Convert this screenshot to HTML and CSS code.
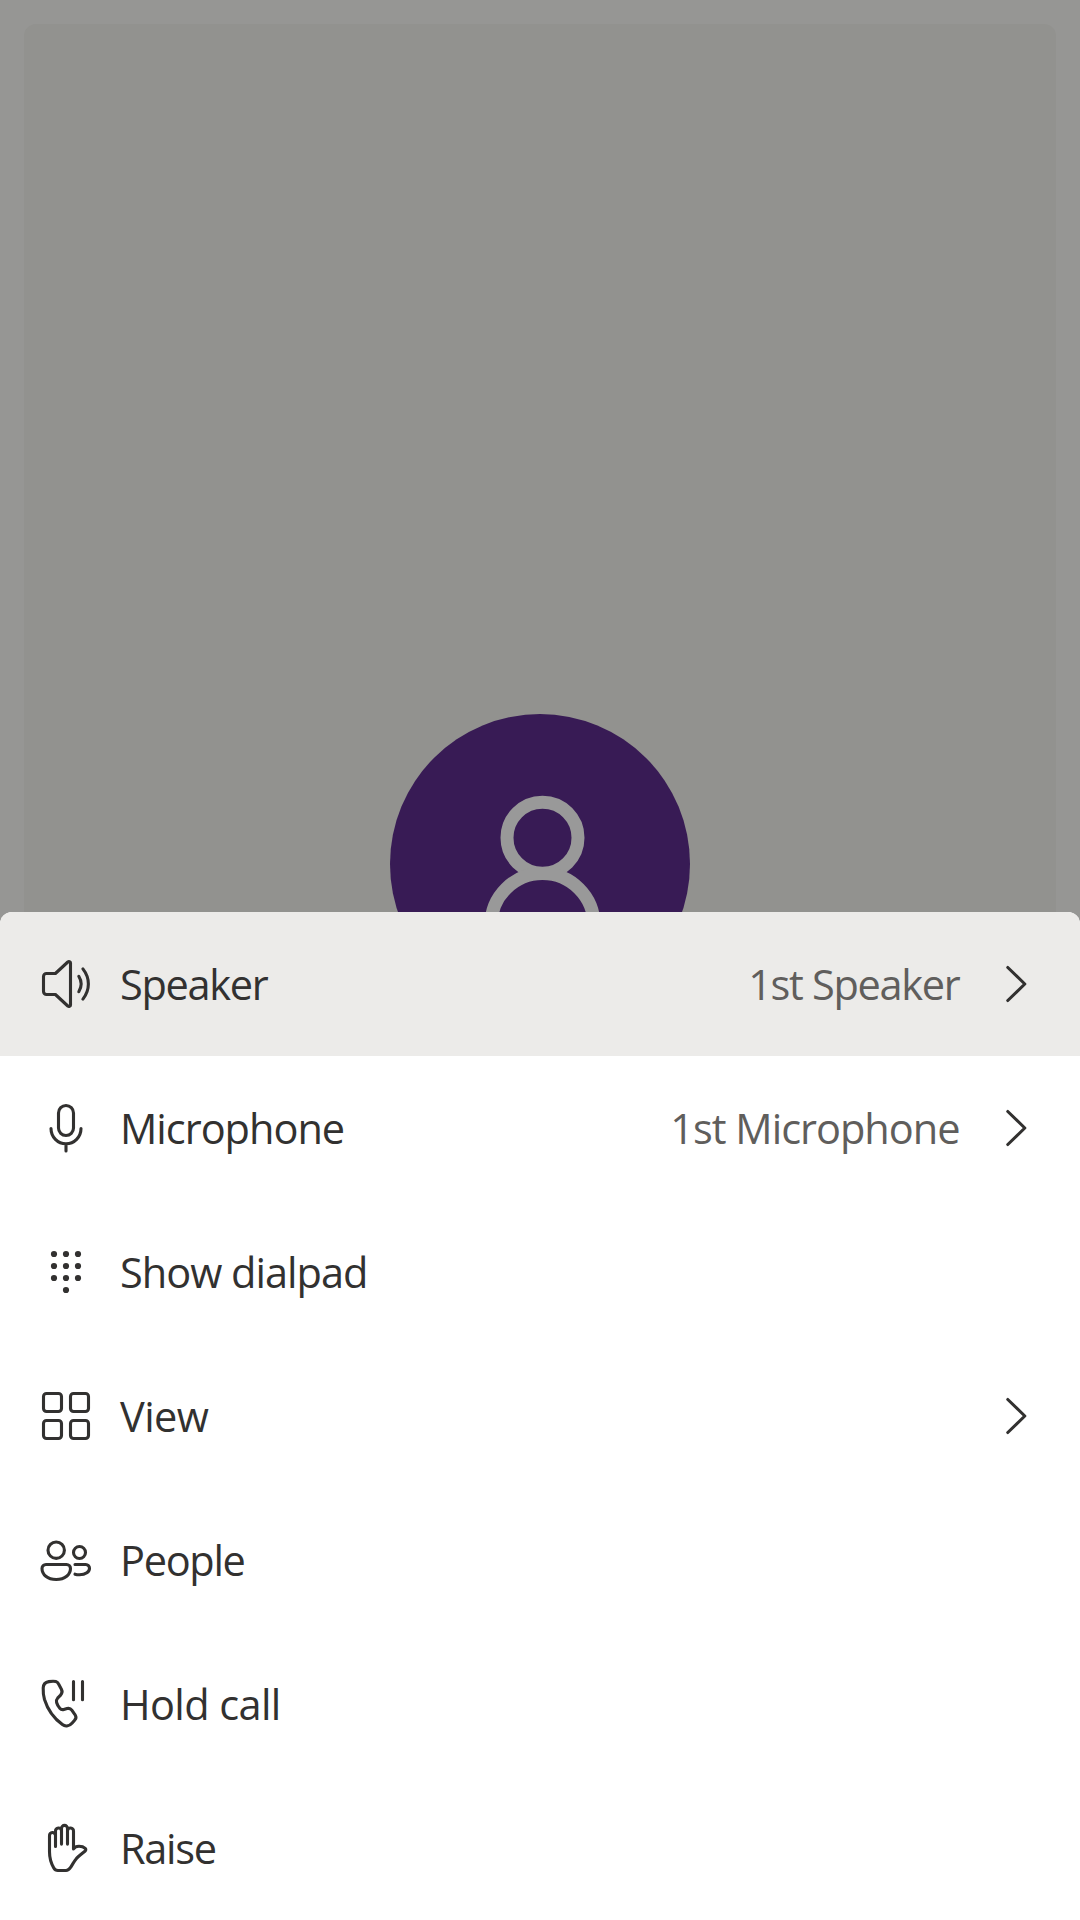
FILE: index.html
```html
<!DOCTYPE html>
<html lang="en">
<head>
<meta charset="utf-8">
<title>Call options</title>
<link rel="stylesheet" href="styles.css">
</head>
<body>
<div class="screen">
  <main class="stage">
    <svg class="avatar" viewBox="0 0 300 300">
      <circle class="avatar-disc" cx="150" cy="150" r="150"/>
      <circle class="avatar-line" cx="152.5" cy="123.7" r="35.5"/>
      <path class="avatar-line" d="M101 211a51.5 51.5 0 0 1 103 0v8h-103z"/>
    </svg>
  </main>
  <ul class="sheet">
    <li class="row row-active">
      <svg class="icon" viewBox="0 0 60 60"><path d="M10.5 19.5h8.9L31.8 8c1-1 2.7-.3 2.7 1.1v41.8c0 1.4-1.7 2.1-2.7 1.1L19.4 40.5h-8.9a3 3 0 0 1-3-3v-15a3 3 0 0 1 3-3z"/><path d="M42.8 22.3c2.9 4.7 2.9 10.7 0 15.4M46.9 14.9c7.3 9.3 7.3 20.9 0 30.2"/></svg>
      <span class="label tighter">Speaker</span>
      <span class="value tighter">1st Speaker</span>
      <svg class="icon" viewBox="0 0 60 60"><path d="M21.8 13.5 38.8 30 21.8 46.5"/></svg>
    </li>
    <li class="row">
      <svg class="icon" viewBox="0 0 60 60"><rect x="22.5" y="7.5" width="15" height="30" rx="7.5"/><path d="M15 30.5c0 8.5 6.7 15.3 15 15.3s15-6.8 15-15.3M30 46v7"/></svg>
      <span class="label">Microphone</span>
      <span class="value">1st Microphone</span>
      <svg class="icon" viewBox="0 0 60 60"><path d="M21.8 13.5 38.8 30 21.8 46.5"/></svg>
    </li>
    <li class="row">
      <svg class="icon dots" viewBox="0 0 60 60"><circle cx="18" cy="12" r="3.1"/><circle cx="30" cy="12" r="3.1"/><circle cx="42" cy="12" r="3.1"/><circle cx="18" cy="24" r="3.1"/><circle cx="30" cy="24" r="3.1"/><circle cx="42" cy="24" r="3.1"/><circle cx="18" cy="36" r="3.1"/><circle cx="30" cy="36" r="3.1"/><circle cx="42" cy="36" r="3.1"/><circle cx="30" cy="48" r="3.1"/></svg>
      <span class="label">Show dialpad</span>
    </li>
    <li class="row">
      <svg class="icon" viewBox="0 0 60 60"><rect x="7.5" y="7.5" width="18" height="18" rx="3"/><rect x="34.5" y="7.5" width="18" height="18" rx="3"/><rect x="7.5" y="34.5" width="18" height="18" rx="3"/><rect x="34.5" y="34.5" width="18" height="18" rx="3"/></svg>
      <span class="label looser">View</span>
      <svg class="icon" viewBox="0 0 60 60"><path d="M21.8 13.5 38.8 30 21.8 46.5"/></svg>
    </li>
    <li class="row">
      <svg class="icon" viewBox="0 0 60 60"><circle cx="20.2" cy="20.2" r="8.2"/><circle cx="43.5" cy="22.5" r="6"/><path d="M10 34.5h20.5a4 4 0 0 1 4 4c0 6-5.5 11-14.3 11S6 44.5 6 38.5a4 4 0 0 1 4-4zM39 34.5h10.8a3.7 3.7 0 0 1 3.7 3.7c0 3.6-3.7 6.6-10 6.6-1.7 0-3.2-.2-4.5-.6"/></svg>
      <span class="label tighter">People</span>
    </li>
    <li class="row">
      <svg class="icon" viewBox="0 0 60 60"><path d="M12.8 7.6c3-.5 5.500-.5 7-.1 1.400.4 2.200 1.300 2.800 2.500l2.800 5.300c1 2 .7 4.200-.8 5.800l-3 3.100c-1.200 1.300-1.500 2.600-1 4.300.6 2.200 1.700 4 3.200 5.700 1 1.200 2.300 1.700 4 1.300l3.300-1c1.900-.5 3.600.1 4.700 1.700l3.500 5c1 1.600.8 3.300-.5 4.700l-2.600 3c-2.600 2.900-6.600 4.100-9.800 1.700-8.500-6.300-14.700-14.800-17.900-25.100-1-3.600-1.500-7-1.300-11.500.1-3.500 2.200-5.800 5.600-6.400zM37.500 7.500v18.200M46.500 7.500v18.200"/></svg>
      <span class="label looser">Hold call</span>
    </li>
    <li class="row">
      <svg class="icon" viewBox="0 0 60 60"><path d="M19.500 28.500V13.300a3 3 0 0 1 6-.5V10.400a3 3 0 0 1 6 0v2.400a3 3 0 0 1 6 .5v17.700c1-1.700 3-2.700 5.500-2.700 2.700 0 4.800.7 6.200 2 .9.900.8 2-.3 2.900-2.800 2.300-5.700 4.300-8.400 7.200-2.200 2.500-3.700 5.600-5.700 8.700-1.500 2.200-2.300 3.400-4.700 3.400h-8.200c-2 0-3.100-.7-4.100-2.500-2.700-4.700-4.300-9-4.300-16.300V17.800a3 3 0 0 1 6-.5M25.500 12.500v13.600M31.500 12.500v13.600"/></svg>
      <span class="label tighter">Raise</span>
    </li>
  </ul>
</div>
</body>
</html>
```
FILE: styles.css
```css
* { box-sizing: border-box; }
body { margin: 0; }
.screen {
  position: relative;
  width: 1080px;
  height: 1920px;
  padding: 24px;
  overflow: hidden;
  background: #969694;
  font-family: "Open Sans", "Noto Sans", sans-serif;
  font-size: 41.5px;
  line-height: 60px;
  letter-spacing: -1px;
  color: #323130;
}
.stage {
  display: flex;
  align-items: center;
  justify-content: center;
  height: 1680px;
  border-radius: 12px;
  background: #92928f;
}
.avatar { width: 300px; height: 300px; }
.avatar-disc { fill: #381b55; }
.avatar-line { fill: none; stroke: #999; stroke-width: 13; }
.sheet {
  position: absolute;
  left: 0;
  right: 0;
  bottom: 0;
  margin: 0;
  padding: 0;
  list-style: none;
  overflow: hidden;
  border-radius: 12px 12px 0 0;
  background: #fff;
}
.row {
  display: flex;
  align-items: center;
  height: 144px;
  padding: 0 34px 0 36px;
}
.row-active { background: #ecebe9; }
.icon {
  flex: none;
  width: 60px;
  height: 60px;
  fill: none;
  stroke: #323130;
  stroke-width: 3.1;
  stroke-linecap: round;
  stroke-linejoin: round;
}
.dots { fill: #323130; stroke: none; }
.label {
  margin-left: 24px;
  margin-right: auto;
  white-space: nowrap;
}
.value {
  margin-right: 26.5px;
  white-space: nowrap;
  color: #605e5c;
}
.tighter { letter-spacing: -1.3px; }
.looser { letter-spacing: -0.6px; }
```
